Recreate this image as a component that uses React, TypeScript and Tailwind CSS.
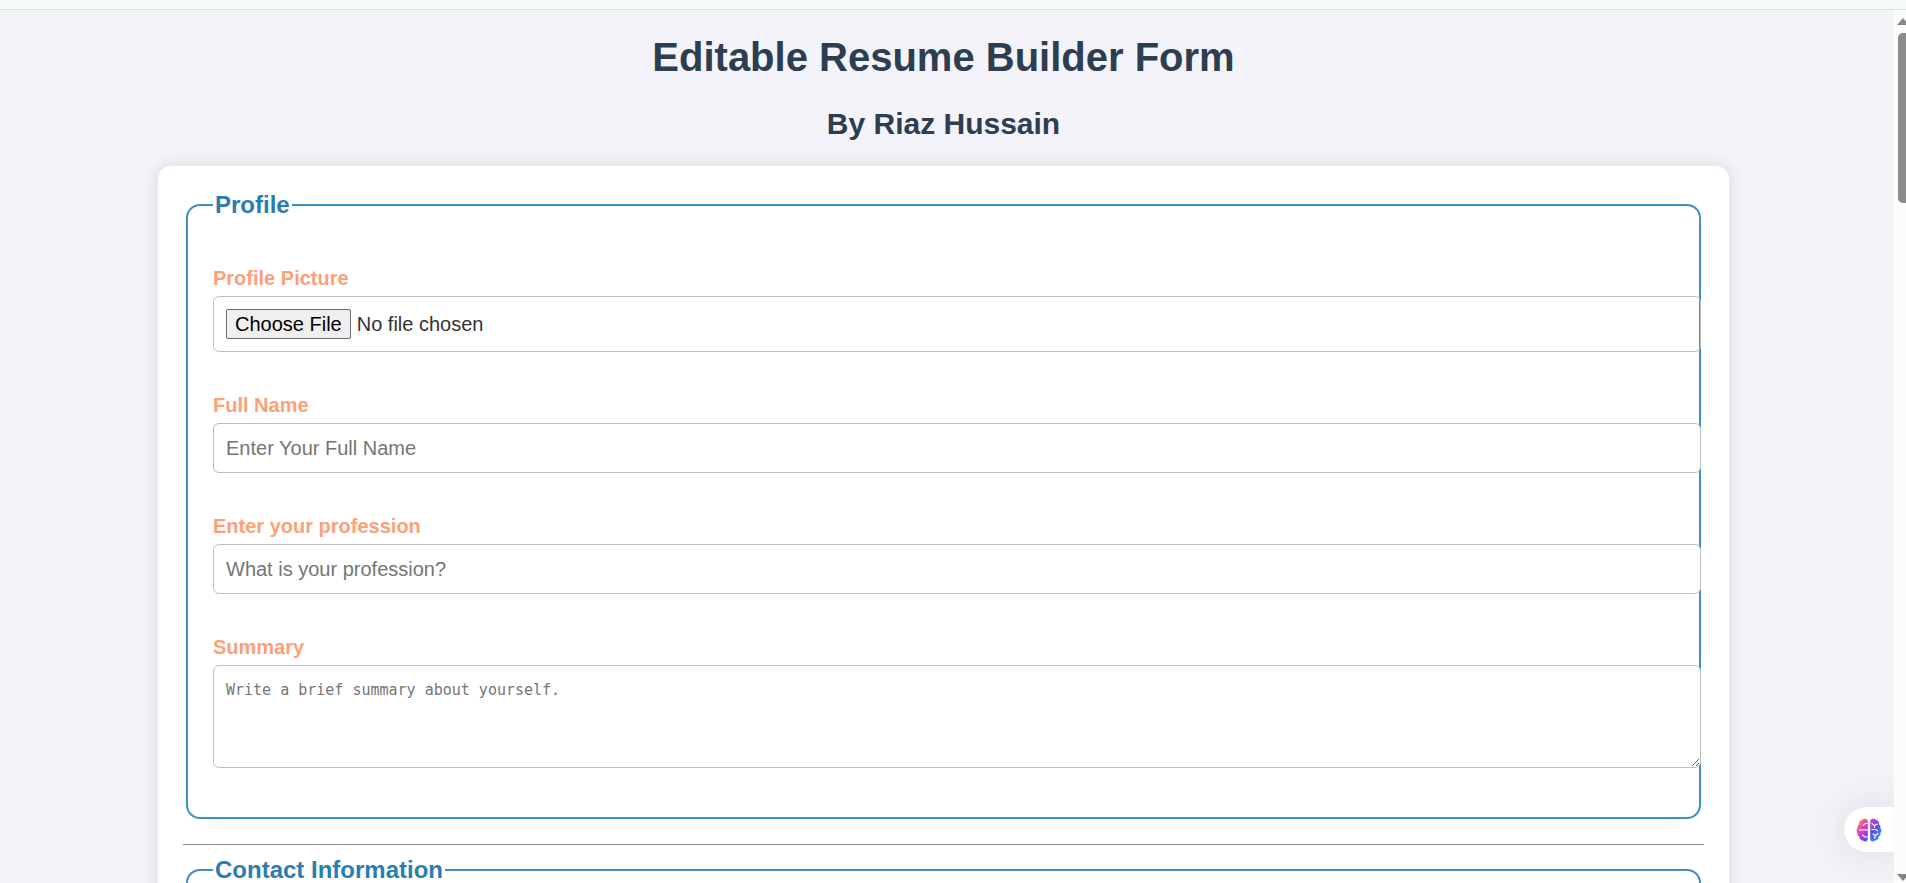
import type { ReactNode } from "react";

const fieldClass =
  "block w-[calc(100%+27px)] rounded-[6px] border border-[#bfbfbf] px-3 text-[20px] text-[#333] placeholder:text-[#757575] placeholder:opacity-100";

function Section({ title, children }: { title: string; children?: ReactNode }) {
  return (
    <fieldset className="mx-[3px] min-w-0 rounded-[14px] border-2 border-[#3b8fc6] px-[25px] pb-[49px]">
      <legend className="px-[2px] text-[24px] leading-7 font-bold text-[#2a7db1]">{title}</legend>
      {children}
    </fieldset>
  );
}

function Field({ id, label, children }: { id: string; label: string; children: ReactNode }) {
  return (
    <div className="flex flex-col items-start">
      <label htmlFor={id} className="pb-[6px] text-[20px] leading-6 font-bold text-[#fca07a]">
        {label}
      </label>
      {children}
    </div>
  );
}

function BrainIcon() {
  return (
    <svg viewBox="0 0 26 24" className="h-6 w-[26px]" aria-hidden="true">
      <defs>
        <linearGradient id="brain" gradientUnits="userSpaceOnUse" x1="4" y1="2" x2="24" y2="19">
          <stop offset="0" stopColor="#f98a4a" />
          <stop offset="0.22" stopColor="#ea45a0" />
          <stop offset="0.42" stopColor="#b93be0" />
          <stop offset="0.65" stopColor="#5a4cf0" />
          <stop offset="1" stopColor="#2f97f7" />
        </linearGradient>
      </defs>
      <path
        fill="url(#brain)"
        d="M11.800 2.500C10.800.6 7.500.2 5.800 2 3.600 2.600 2.500 4.600 3 6.500 1.500 7.500 1.200 9 1.600 10.200.2 11.500.2 13.300 1.500 14.400 1.100 16.500 2 18 3.300 18.500 3.300 21 5 22.500 7 22.500 8.800 24.200 11.200 23.500 11.800 21.500ZM14.200 2.500C15.200.6 18.500.2 20.200 2 22.400 2.600 23.500 4.600 23 6.500 24.500 7.500 24.800 9 24.400 10.200 25.800 11.500 25.800 13.300 24.500 14.400 24.900 16.500 24 18 22.700 18.500 22.700 21 21 22.500 19 22.500 17.200 24.200 14.800 23.500 14.200 21.500Z"
      />
      <path
        fill="none"
        stroke="#fff"
        strokeWidth="1.1"
        strokeLinecap="round"
        strokeLinejoin="round"
        d="M11.800 5.500H9.500L7 7.500M3.200 12H11.800M11.800 19H9L6.500 17M16 5.500 18.500 7.500 21.500 6M18.500 7.500V9.500M16 11.500H19.500L21.500 12.800M17 16 19.500 17.500 22 15.500M19.500 17.500 18.500 20"
      />
    </svg>
  );
}

export default function App() {
  return (
    <div className="flex h-screen flex-col overflow-hidden bg-[#f4f3fa] font-['Liberation_Sans',Arial,sans-serif]">
      <div className="h-[10px] shrink-0 border-b border-[#dadfe6] bg-[#f5fbf9]" />
      <div className="flex min-h-0 flex-1">
        <main className="min-w-0 flex-1 overflow-hidden pr-[165px] pl-[158px]">
          <header className="flex flex-col items-center gap-[26px] pt-6 pb-[25px] text-center font-bold text-[#2c3e50]">
            <h1 className="text-[40px] leading-[46px]">Editable Resume Builder Form</h1>
            <h2 className="text-[30px] leading-[35px]">By Riaz Hussain</h2>
          </header>
          <form className="rounded-[13px] bg-white px-[25px] pt-[25px] shadow-[0_0_18px_rgba(0,0,0,0.12)]">
            <Section title="Profile">
              <div className="flex flex-col gap-[41px] pt-[47px]">
                <Field id="picture" label="Profile Picture">
                  <input
                    id="picture"
                    type="file"
                    className={`${fieldClass} py-3 leading-[30px] file:mr-[6px] file:h-[30px] file:rounded-[2px] file:border file:border-solid file:border-[#6b6b6b] file:bg-[#efefef] file:px-2 file:text-[20px] file:leading-7 file:text-black`}
                  />
                </Field>
                <Field id="name" label="Full Name">
                  <input id="name" type="text" placeholder="Enter Your Full Name" className={`${fieldClass} h-[50px] bg-white`} />
                </Field>
                <Field id="profession" label="Enter your profession">
                  <input id="profession" type="text" placeholder="What is your profession?" className={`${fieldClass} h-[50px] bg-white`} />
                </Field>
                <Field id="summary" label="Summary">
                  <textarea
                    id="summary"
                    placeholder="Write a brief summary about yourself."
                    className="block h-[103px] w-[calc(100%+27px)] resize rounded-[6px] border border-[#bfbfbf] bg-white px-3 py-3 font-['DejaVu_Sans_Mono',monospace] text-[15px] leading-6 text-[#333] placeholder:text-[#757575] placeholder:opacity-100"
                  />
                </Field>
              </div>
            </Section>
            <hr className="mt-[25px] mb-[11px] border-0 border-t border-[#8c8c8c]" />
            <Section title="Contact Information">
              <div className="h-20" />
            </Section>
          </form>
        </main>
        <div className="flex w-3 shrink-0 flex-col items-end justify-between overflow-hidden bg-[#fcfcfc] pt-2" aria-hidden="true">
          <div className="flex flex-col items-end gap-2">
            <svg viewBox="0 0 9 7" className="h-[7px] w-[9px]">
              <path d="M0 7 6 0 9 3.500V7Z" fill="#858585" />
            </svg>
            <div className="h-[170px] w-2 rounded-l-[5px] bg-[#8b8b8b]" />
          </div>
          <svg viewBox="0 0 9 9" className="h-[9px] w-[9px]">
            <path d="M0 0H9V3.500L6 7Z" fill="#858585" />
          </svg>
        </div>
      </div>
      <button
        type="button"
        aria-label="Assistant"
        className="absolute right-3 bottom-[31px] flex h-[45px] w-[50px] items-center rounded-l-full bg-white pl-3 shadow-[0_0_40px_rgba(0,0,0,0.12)] [clip-path:inset(-60px_0_-60px_-60px)]"
      >
        <BrainIcon />
      </button>
    </div>
  );
}
